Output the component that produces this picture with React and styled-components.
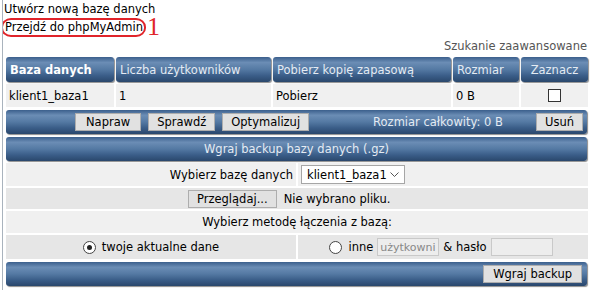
import React from "react";
import styled, { createGlobalStyle } from "styled-components";

const GlobalStyle = createGlobalStyle`
  body {
    margin: 0;
    background: #fff;
    font-family: "DejaVu Sans", Verdana, sans-serif;
    font-size: 11.5px;
    color: #000;
  }
`;

const blue = `linear-gradient(to bottom, #3b5f8c 0%, #6b8db5 22%, #5479a3 50%, #3a5d88 75%, #2a476c 100%)`;

const Page = styled.div`
  width: 588px;
  height: 290px;
  box-sizing: border-box;
  margin-left: 2px;
  border-left: 1px solid #a9b3bd;
  padding: 1px 3px 0 1px;
  overflow: hidden;
`;

const Line = styled.div`
  line-height: 17px;
  height: 17px;
`;

const Circled = styled.span`
  display: inline-block;
  border: 2px solid #e0242a;
  border-radius: 10px / 9px;
  padding: 0 1px 0 2px;
  margin-left: -3px;
  line-height: 15px;
`;

const Mark = styled.span`
  color: #e0242a;
  font-family: "Liberation Serif", serif;
  font-size: 26px;
  line-height: 18px;
  vertical-align: top;
  margin-left: 1px;
`;

const Search = styled.div`
  text-align: right;
  color: #555;
  line-height: 16px;
  margin-top: 3px;
`;

const Table = styled.div`
  display: grid;
  grid-template-columns: 108px 155px 178px 66px 67px;
  column-gap: 2px;
  row-gap: 2px;
  margin: 3px 0 0 2px;
`;

const HeadCell = styled.div`
  height: 25px;
  box-sizing: border-box;
  display: flex;
  align-items: center;
  padding-left: ${(p) => (p.$center ? "0" : "4px")};
  justify-content: ${(p) => (p.$center ? "center" : "flex-start")};
  background: ${blue};
  border-radius: 3px;
  box-shadow: 1px 1px 1px rgba(0, 0, 0, 0.45);
  color: ${(p) => (p.$bold ? "#fff" : "#e4ebf3")};
  font-weight: ${(p) => (p.$bold ? "bold" : "normal")};
`;

const Cell = styled.div`
  height: 23px;
  display: flex;
  align-items: center;
  padding-left: ${(p) => (p.$center ? "0" : "3px")};
  justify-content: ${(p) => (p.$center ? "center" : "flex-start")};
  background: #f0f0f0;
`;

const Checkbox = styled.span`
  width: 11px;
  height: 11px;
  border: 1px solid #333;
  background: #fff;
`;

const Bar = styled.div`
  height: 24px;
  box-sizing: border-box;
  margin: 3px 0 0 2px;
  background: ${blue};
  border-radius: 3px;
  box-shadow: 1px 1px 1px rgba(0, 0, 0, 0.45);
  display: flex;
  align-items: center;
  justify-content: ${(p) => p.$justify || "flex-start"};
  padding: ${(p) => p.$pad || "0"};
  color: #e4ebf3;
`;

const Button = styled.span`
  display: inline-flex;
  align-items: center;
  justify-content: center;
  height: 18px;
  box-sizing: border-box;
  padding: 0 ${(p) => p.$pad || 10}px;
  background: #e1e1e1;
  border: 1px solid #adadad;
  color: #000;
  font-size: 11.5px;
  margin-left: ${(p) => p.$ml || 0}px;
`;

const Total = styled.span`
  margin-left: 64px;
`;

const Push = styled.span`
  margin-left: auto;
`;

const Form = styled.div`
  display: grid;
  grid-template-columns: 290px 290px;
  gap: 2px;
  margin: 2px 0 0 2px;
`;

const FormCell = styled.div`
  grid-column: ${(p) => (p.$wide ? "1 / span 2" : "auto")};
  height: ${(p) => p.$h || 23}px;
  display: flex;
  align-items: center;
  justify-content: ${(p) => p.$justify || "center"};
  padding: 0 3px;
  background: ${(p) => (p.$dark ? "#e6e6e6" : "#f0f0f0")};
`;

const Select = styled.span`
  width: 104px;
  height: 19px;
  box-sizing: border-box;
  border: 1px solid #a6a6a6;
  background: #fff;
  display: flex;
  align-items: center;
  justify-content: space-between;
  padding: 0 5px;
`;

const FilePick = styled.span`
  width: 218px;
  display: flex;
  align-items: center;
  gap: 7px;
`;

const Radio = styled.span`
  width: 11px;
  height: 11px;
  border: 1px solid #444;
  border-radius: 50%;
  background: #fff;
  display: inline-flex;
  align-items: center;
  justify-content: center;
  margin-right: 6px;
  &::after {
    content: "";
    width: 5px;
    height: 5px;
    border-radius: 50%;
    background: ${(p) => (p.$on ? "#222" : "transparent")};
  }
`;

const Field = styled.span`
  width: 62px;
  height: 18px;
  box-sizing: border-box;
  border: 1px solid #c9c9c9;
  background: #ededed;
  color: #888;
  display: inline-flex;
  align-items: center;
  padding-left: 2px;
  margin: 0 4px 0 4px;
  overflow: hidden;
  white-space: nowrap;
  font-size: 11px;
`;

const Option = styled.span`
  display: inline-flex;
  align-items: center;
`;

export default function App() {
  return (
    <>
      <GlobalStyle />
      <Page>
        <Line>Utwórz nową bazę danych</Line>
        <Line>
          <Circled>Przejdź do phpMyAdmin</Circled>
          <Mark>1</Mark>
        </Line>
        <Search>Szukanie zaawansowane</Search>

        <Table>
          <HeadCell $bold>Baza danych</HeadCell>
          <HeadCell>Liczba użytkowników</HeadCell>
          <HeadCell>Pobierz kopię zapasową</HeadCell>
          <HeadCell>Rozmiar</HeadCell>
          <HeadCell $center>Zaznacz</HeadCell>
          <Cell>klient1_baza1</Cell>
          <Cell>1</Cell>
          <Cell>Pobierz</Cell>
          <Cell>0 B</Cell>
          <Cell $center>
            <Checkbox />
          </Cell>
        </Table>

        <Bar $pad="0 4px 0 69px">
          <Button $pad={10}>Napraw</Button>
          <Button $pad={8} $ml={7}>Sprawdź</Button>
          <Button $pad={8} $ml={7}>Optymalizuj</Button>
          <Total>Rozmiar całkowity: 0 B</Total>
          <Push />
          <Button $pad={8}>Usuń</Button>
        </Bar>

        <Bar $justify="center">Wgraj backup bazy danych (.gz)</Bar>

        <Form>
          <FormCell $justify="flex-end">Wybierz bazę danych</FormCell>
          <FormCell $justify="flex-start">
            <Select>
              klient1_baza1
              <svg width="9" height="6" viewBox="0 0 9 6">
                <path d="M0.5 0.5 L4.5 4.5 L8.5 0.5" fill="none" stroke="#555" strokeWidth="1" />
              </svg>
            </Select>
          </FormCell>
          <FormCell $wide $dark $h={21}>
            <FilePick>
              <Button $pad={8}>Przeglądaj...</Button>
              Nie wybrano pliku.
            </FilePick>
          </FormCell>
          <FormCell $wide $h={22}>Wybierz metodę łączenia z bazą:</FormCell>
          <FormCell $dark $h={24}>
            <Option>
              <Radio $on />
              twoje aktualne dane
            </Option>
          </FormCell>
          <FormCell $dark $h={24}>
            <Option>
              <Radio />
              inne
              <Field>użytkowni</Field>
              &amp; hasło
              <Field />
            </Option>
          </FormCell>
        </Form>

        <Bar $justify="flex-end" $pad="0 5px 0 0">
          <Button $pad={9}>Wgraj backup</Button>
        </Bar>
      </Page>
    </>
  );
}
